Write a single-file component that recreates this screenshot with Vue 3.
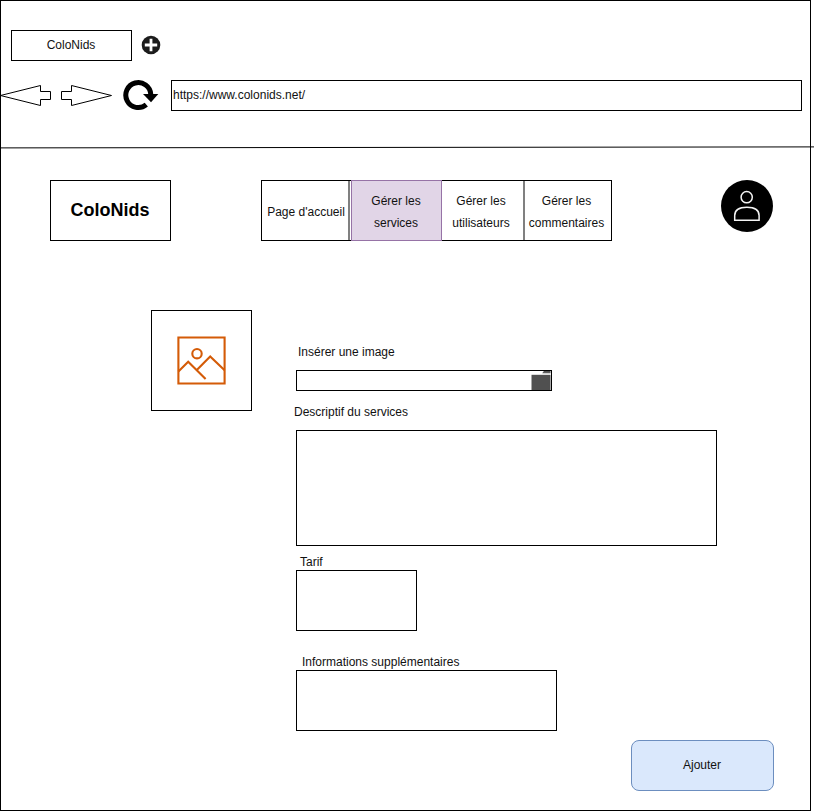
<script setup>
const nav = [
  { id: 'home', lines: ["Page d'accueil"] },
  { id: 'services', lines: ['Gérer les', 'services'], active: true },
  { id: 'users', lines: ['Gérer les', 'utilisateurs'] },
  { id: 'comments', lines: ['Gérer les', 'commentaires'] },
]
</script>

<template>
  <div class="window">
    <header class="chrome">
      <div class="tabs">
        <div class="tab">ColoNids</div>
        <svg class="plus" width="20" height="20" viewBox="0 0 20 20">
          <circle cx="10" cy="10" r="9.3" fill="#1c1c1c" />
          <path d="M10 3.8V16.2M3.8 10H16.2" stroke="#fff" stroke-width="2.8" />
        </svg>
      </div>
      <div class="toolbar">
        <svg class="arrows" width="112" height="31" viewBox="0 0 112 31">
          <path d="M50.5 11.5V19.5H40.5V25.5L.5 15.5L40.5 5.5V11.5Z" fill="#fff" stroke="#000" />
          <path d="M61.5 11.5V19.5H71.5V25.5L111.5 15.5L71.5 5.5V11.5Z" fill="#fff" stroke="#000" />
        </svg>
        <svg class="reload" width="36" height="31" viewBox="0 0 36 31">
          <path d="M27.8 14.5A12.5 12.5 0 1 0 23.3 24.7" fill="none" stroke="#000" stroke-width="5" />
          <path d="M20 14H35.3L28 22.3Z" />
        </svg>
        <div class="url">https://www.colonids.net/</div>
      </div>
      <svg class="rule" width="814" height="3" viewBox="0 0 814 3">
        <path d="M0 1.9L814 .9" stroke="#000" fill="none" />
      </svg>
    </header>

    <div class="banner">
      <div class="brand">ColoNids</div>
      <nav class="nav">
        <a v-for="item in nav" :key="item.id" :class="['cell', item.id, { active: item.active }]">
          <span v-for="line in item.lines" :key="line">{{ line }}</span>
        </a>
      </nav>
      <svg class="avatar" width="52" height="52" viewBox="0 0 52 52">
        <circle cx="26" cy="26" r="26" />
        <g fill="none" stroke="#f4f4f4" stroke-width="1.5">
          <circle cx="25.7" cy="17.2" r="5.6" />
          <path d="M13.7 40.2V35.5C13.7 29.5 18.5 27.2 25.9 27.2S38.1 29.5 38.1 35.5V40.2Z" />
        </g>
      </svg>
    </div>

    <main class="content">
      <div class="preview">
        <svg width="50" height="50" viewBox="0 0 50 50" fill="none" stroke="#d45b07" stroke-width="2.1">
          <path d="M1.4 1.5H47.6V47.5H1.4Z" />
          <circle cx="20" cy="17.7" r="4.7" />
          <path d="M1.4 35.5L11.2 25.7L28.6 43M19.8 34L33.2 20.5L47.6 34.3" />
        </svg>
      </div>
      <form class="form" @submit.prevent>
        <label class="label image-label">Insérer une image</label>
        <div class="box file">
          <svg width="20" height="20" viewBox="0 0 20 20">
            <path d="M0 4H20V20H0Z" fill="#505050" />
            <path d="M13 0H20V2H11.5Z" fill="#505050" />
            <path d="M11.5 2.5H20" stroke="#c8c8c8" />
          </svg>
        </div>
        <label class="label desc-label">Descriptif du services</label>
        <div class="box desc"></div>
        <label class="label price-label">Tarif</label>
        <div class="box price"></div>
        <label class="label info-label">Informations supplémentaires</label>
        <div class="box info"></div>
      </form>
    </main>
    <footer class="actions">
      <button class="submit" type="button">Ajouter</button>
    </footer>
  </div>
</template>

<style>
body {
  margin: 0;
  background: #fff;
}
</style>

<style scoped>
.window,
.window * {
  box-sizing: border-box;
}
.window {
  width: 811px;
  height: 811px;
  border: 1px solid #000;
  font-family: "Liberation Sans", Arial, sans-serif;
  font-size: 12px;
  line-height: 14px;
  color: #111;
}
svg {
  display: block;
  flex: none;
}
.chrome {
  height: 149px;
  margin-left: -1px;
  padding-top: 29px;
}
.tabs {
  display: flex;
  align-items: center;
  gap: 9px;
  height: 31px;
  padding-left: 11px;
}
.tab {
  width: 121px;
  height: 31px;
  border: 1px solid #000;
  display: flex;
  align-items: center;
  justify-content: center;
  padding-right: 1px;
  padding-bottom: 1px;
}
.plus {
  margin-top: -1px;
}
.toolbar {
  display: flex;
  margin-top: 19px;
}
.reload {
  margin-left: 11px;
}
.url {
  width: 631px;
  height: 31px;
  margin-left: 12px;
  border: 1px solid #000;
  padding: 7px 1px;
}
.rule {
  margin-top: 35px;
}
.banner {
  display: flex;
  margin-top: 30px;
  padding-left: 49px;
}
.brand {
  width: 121px;
  height: 61px;
  border: 1px solid #000;
  display: flex;
  align-items: center;
  justify-content: center;
  color: #000;
  font-size: 18px;
  font-weight: bold;
  padding-right: 1px;
  padding-bottom: 1px;
}
.nav {
  display: flex;
  width: 351px;
  height: 61px;
  margin-left: 90px;
  border: 1px solid #000;
}
.cell {
  display: flex;
  flex-direction: column;
  align-items: center;
  justify-content: center;
  line-height: 22px;
  white-space: nowrap;
}
.home {
  width: 88px;
  border-right: 2px solid #808080;
  padding-top: 2px;
}
.home span {
  margin-left: 2px;
}
.services {
  width: 91px;
  height: 61px;
  margin: -1px 0 0 1px;
  background: #e1d5e7;
  border: 1px solid #9673a6;
  padding-top: 2px;
  padding-right: 1px;
}
.users {
  width: 83px;
  border-right: 2px solid #808080;
  padding-top: 2px;
  padding-right: 3px;
}
.comments {
  width: 86px;
  padding-top: 2px;
  padding-right: 3px;
}
.avatar {
  margin-left: 109px;
}
.content {
  display: flex;
  align-items: flex-start;
  margin-top: 69px;
  padding-left: 150px;
}
.preview {
  width: 101px;
  height: 101px;
  border: 1px solid #000;
  padding: 25px;
}
.form {
  display: flex;
  flex-direction: column;
  align-items: flex-start;
  margin: 35px 0 0 44px;
}
.label {
  height: 14px;
  white-space: nowrap;
}
.image-label {
  margin-left: 2px;
}
.desc-label {
  margin: 14px 0 0 -2px;
}
.price-label {
  margin: 9px 0 0 4px;
}
.info-label {
  margin: 24px 0 0 6px;
}
.box {
  border: 1px solid #000;
}
.file {
  width: 256px;
  height: 21px;
  margin-top: 11px;
  display: flex;
  justify-content: flex-end;
}
.file svg {
  height: 19px;
}
.desc {
  width: 421px;
  height: 116px;
  margin-top: 11px;
}
.price {
  width: 121px;
  height: 61px;
  margin-top: 1px;
}
.info {
  width: 261px;
  height: 61px;
  margin-top: 1px;
}
.actions {
  display: flex;
  justify-content: flex-end;
  margin-top: 9px;
  padding-right: 36px;
}
.submit {
  width: 143px;
  height: 51px;
  padding: 0 1px 1px 0;
  border: 1px solid #6c8ebf;
  border-radius: 8px;
  background: #dae8fc;
  font: inherit;
  color: inherit;
}
</style>
